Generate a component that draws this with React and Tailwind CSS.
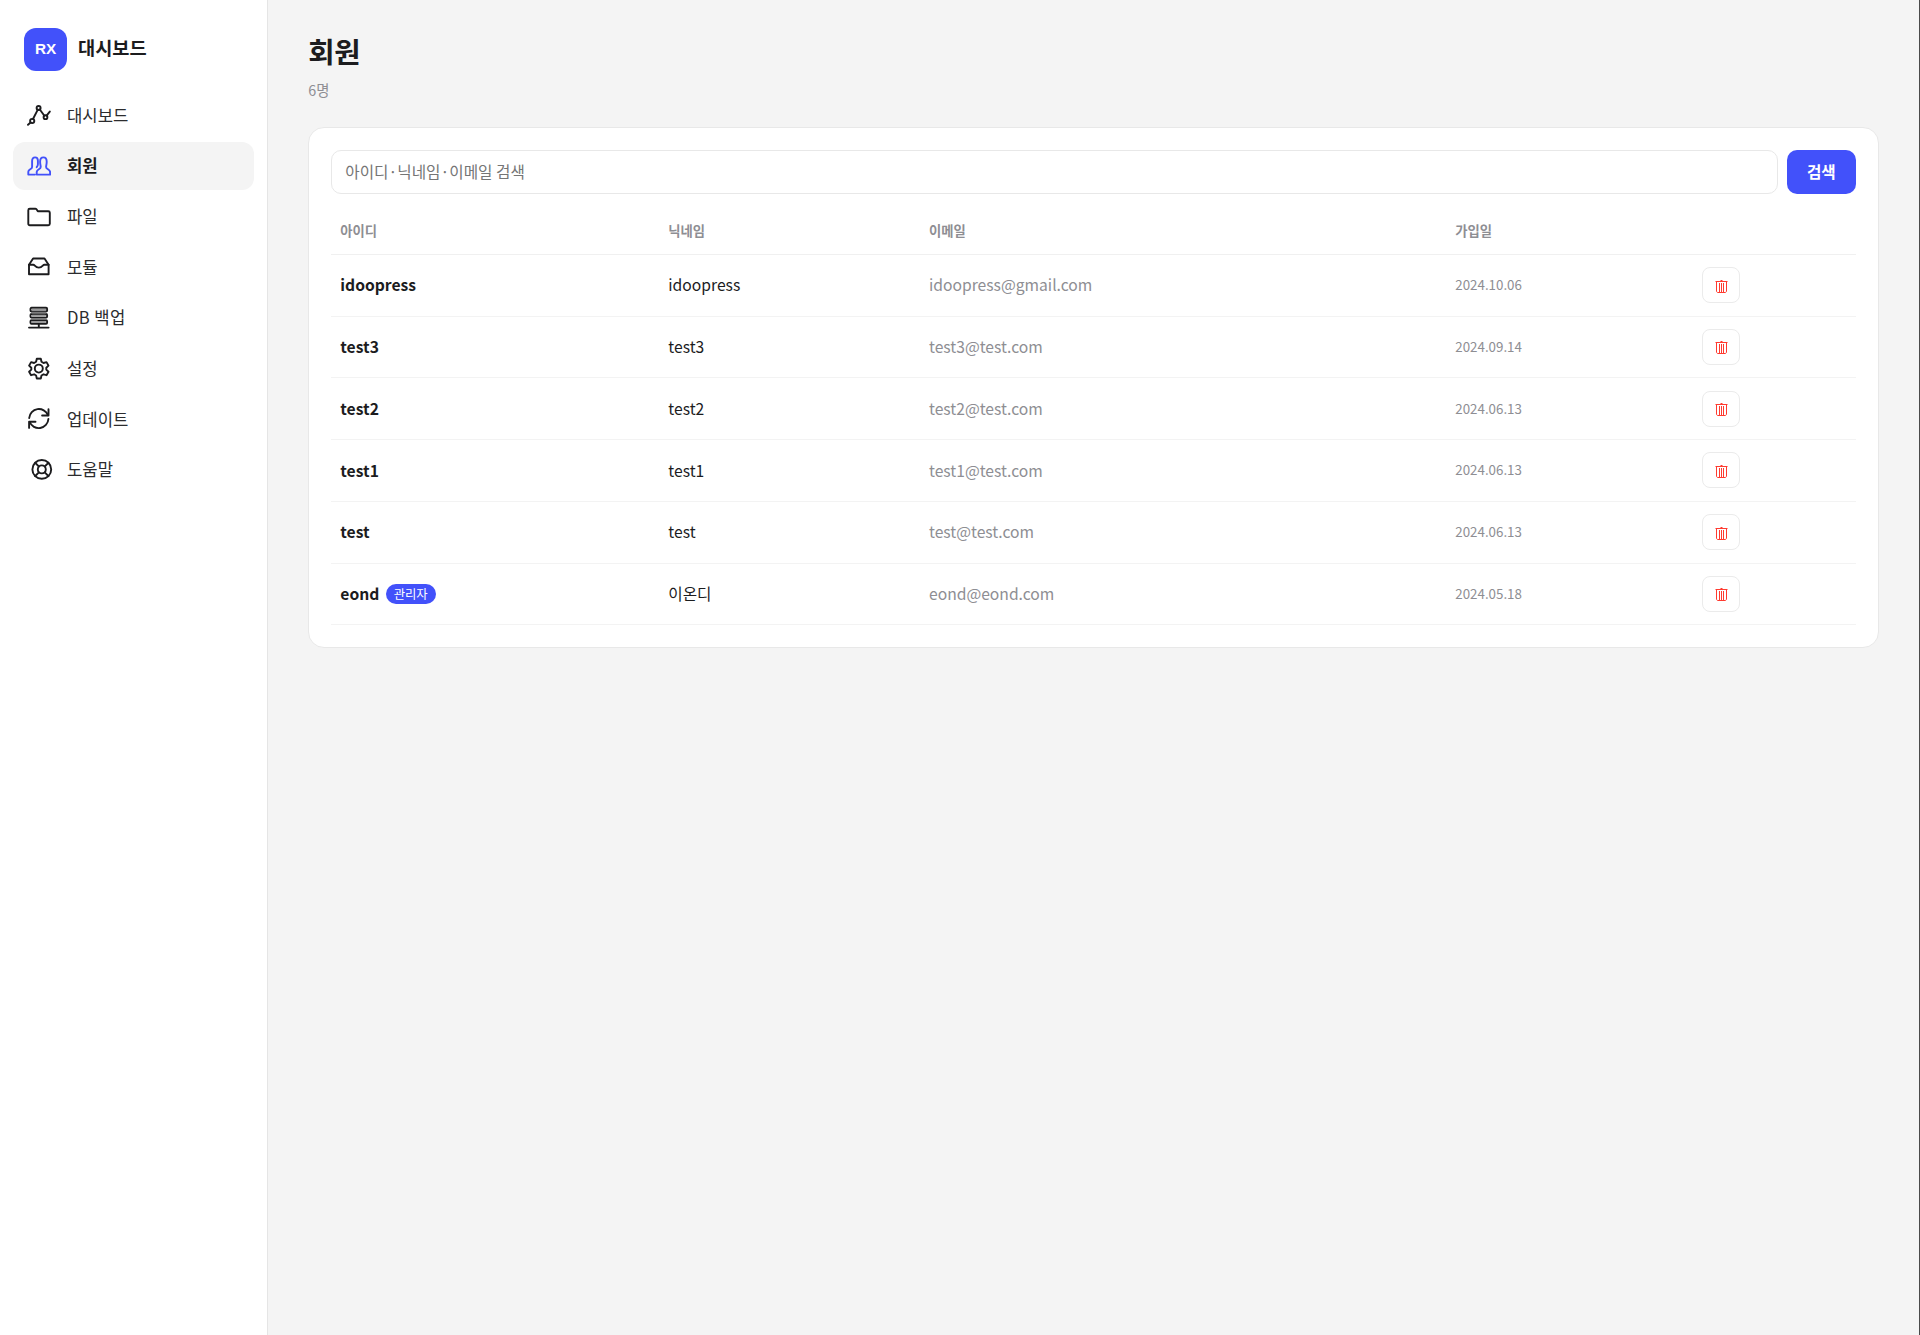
import React from 'react';
import clsx from 'clsx';

const icons = {
  dashboard: (
    <>
      <circle cx="11.6" cy="5" r="2" />
      <circle cx="5.2" cy="18" r="2.1" />
      <circle cx="18.5" cy="14.2" r="1.9" />
      <path d="M1 21.8l2.6-2.2M6 16l4.8-9.4M12.8 6.5l4.6 6.2M19.6 12.6l3.2-4" />
    </>
  ),
  members: (
    <>
      <path d="M8 20.6H1.3v-2.8c0-2.6 3.8-2.4 3.8-4.9V7c0-2.4 1-3.6 3-3.6 1.8 0 2.8 1.1 2.8 3.3v3.6c0 1.4-.6 2.2-1.2 2.9" />
      <path d="M9.7 20.6v-2.5c0-2.8 4-2.8 4-5.2 0-1.5-.6-2.4-.6-5.2 0-2.8 1-4.3 3.3-4.3s3.3 1.5 3.3 4.3-.6 3.7-.6 5.2c0 2.4 4 2.4 4 5.2v2.5z" />
    </>
  ),
  files: <path d="M1.3 18.7V5.2c0-.9.6-1.5 1.5-1.5h5.4c.6 0 1 .2 1.3.6l1.3 1.9h10.5c.9 0 1.500.6 1.500 1.500v11c0 .9-.6 1.500-1.500 1.500H2.800c-.9 0-1.500-.6-1.500-1.500z" />,
  modules: (
    <>
      <path d="M2 9.7L6.1 3.5h11.4L21.6 9.7v9.6H2z" />
      <path d="M2 9.7h4.3c1.5 0 1.8 2.9 5.5 2.9s4-2.9 5.5-2.9h4.3" />
    </>
  ),
  backup: (
    <>
      <rect x="3.5" y="1.8" width="16.6" height="3.6" rx="1" />
      <rect x="3.5" y="8" width="16.6" height="3.6" rx="1" />
      <rect x="3.5" y="14.2" width="16.6" height="3.6" rx="1" />
      <path d="M11.8 17.8v3.8M2 21.6h19.6" />
      <path className="stroke-[#7a7a7b]" d="M5 6.7h13.6M5 12.9h13.6" />
      <path className="stroke-[#9a9a9b]" d="M5.5 3.6h12.6M5.5 9.8h12.6M5.5 16h12.6" />
    </>
  ),
  settings: (
    <>
      <circle cx="11.8" cy="11.6" r="4" />
      <path d="M9.8 1.8h4l.7 3 2 1.2 3-.9 2 3.5-2.2 2.1v1.9l2.2 2.1-2 3.5-3-.9-2 1.2-.7 3h-4l-.7-3-2-1.2-3 .9-2-3.5 2.2-2.1v-1.9L2.1 8.6l2-3.5 3 .9 2-1.2z" />
    </>
  ),
  update: (
    <>
      <path d="M2.2 11a9.7 9.7 0 0 1 18.7-2.8M21.4 12a9.7 9.7 0 0 1-18.7 3" />
      <path d="M21.5 2.3v6.2h-6.4M2.1 20.9v-6.2h6.4" />
    </>
  ),
  help: (
    <>
      <circle cx="11.8" cy="11.4" r="9.4" />
      <circle cx="11.8" cy="11.4" r="4" />
      <path d="M5.2 4.8l3.7 3.7M18.4 4.8l-3.7 3.7M5.2 18l3.7-3.7M18.4 18l-3.7-3.7" />
    </>
  ),
};

const menu = [
  { id: 'dashboard', label: '대시보드' },
  { id: 'members', label: '회원' },
  { id: 'files', label: '파일' },
  { id: 'modules', label: '모듈' },
  { id: 'backup', label: 'DB 백업' },
  { id: 'settings', label: '설정' },
  { id: 'update', label: '업데이트' },
  { id: 'help', label: '도움말' },
];

const members = [
  { id: 'idoopress', nick: 'idoopress', email: 'idoopress@gmail.com', date: '2024.10.06' },
  { id: 'test3', nick: 'test3', email: 'test3@test.com', date: '2024.09.14' },
  { id: 'test2', nick: 'test2', email: 'test2@test.com', date: '2024.06.13' },
  { id: 'test1', nick: 'test1', email: 'test1@test.com', date: '2024.06.13' },
  { id: 'test', nick: 'test', email: 'test@test.com', date: '2024.06.13' },
  { id: 'eond', nick: '이온디', email: 'eond@eond.com', date: '2024.05.18', admin: true },
];

const Sidebar = ({ active }) => (
  <aside className="w-[268px] shrink-0 border-r border-[#e5e5e5] bg-white px-[13.33px] pt-7">
    <div className="flex items-center pl-[11px]">
      <div className="flex h-[42.67px] w-[42.67px] items-center justify-center rounded-[12px] bg-[#4251fa] pt-px font-['Liberation_Sans'] text-[15.33px] font-bold text-white">
        RX
      </div>
      <span className="ml-[11px] -mt-[4px] text-[18.67px] font-bold">대시보드</span>
    </div>
    <nav className="mt-[20.33px] flex flex-col gap-[2px]">
      {menu.map((item) => (
        <a
          key={item.id}
          className={clsx(
            'flex h-[48.67px] items-center rounded-[12px] pl-[14px] text-[16.67px]',
            item.id === active ? 'bg-[#f4f4f4] font-bold' : 'text-[#2c2c2e]'
          )}
        >
          <svg
            viewBox="0 0 24 24"
            className={clsx(
              'h-6 w-6 shrink-0 fill-none stroke-[1.9]',
              item.id === active ? 'stroke-[#4251fa]' : 'stroke-[#1c1c1e]',
              item.id === 'help' ? 'ml-[3px] mr-[12.67px]' : 'mr-[15.67px]'
            )}
            strokeLinecap="round"
            strokeLinejoin="round"
          >
            {icons[item.id]}
          </svg>
          <span className={clsx(item.id === 'backup' && 'tracking-[0.4px]')}>{item.label}</span>
        </a>
      ))}
    </nav>
  </aside>
);

const TrashIcon = () => (
  <svg viewBox="0 0 13 14" className="mt-px ml-px h-[14px] w-[13px] fill-none stroke-[#ff3b30] stroke-1">
    <path d="M.5 2.5h12M5.5 1.500h2M1.500 2.500v9.500c0 .9.600 1.500 1.500 1.500h7c.9 0 1.500-.6 1.500-1.500V2.500M4.500 4v9M6.500 4v9M8.500 4v9" />
  </svg>
);

const MemberTable = () => (
  <table className="mt-[15px] w-full table-fixed text-left">
    <colgroup>
      <col className="w-[328px]" />
      <col className="w-[260.67px]" />
      <col className="w-[526.33px]" />
      <col className="w-[246.67px]" />
      <col />
    </colgroup>
    <thead>
      <tr className="h-[45.67px] border-b border-[#f0f0f0] text-[13.33px] text-[#8e8e93]">
        <th className="px-[9.33px] font-bold">아이디</th>
        <th className="px-[9.33px] font-bold">닉네임</th>
        <th className="px-[9.33px] font-bold">이메일</th>
        <th className="px-[9.33px] font-bold">가입일</th>
        <th />
      </tr>
    </thead>
    <tbody>
      {members.map((m) => (
        <tr key={m.id} className="h-[61.75px] border-b border-[#f3f3f3] text-[15.67px]">
          <td className="px-[9.33px]">
            <div className="flex items-center">
              <b className="font-bold">{m.id}</b>
              {m.admin && (
                <span className="ml-[6.33px] mt-px flex h-[20px] items-center rounded-full bg-[#4251fa] px-2 text-[12.33px] text-white">
                  관리자
                </span>
              )}
            </div>
          </td>
          <td className="px-[9.33px]">{m.nick}</td>
          <td className="px-[9.33px] text-[#8e8e93]">{m.email}</td>
          <td className="px-[9.33px] text-[13.33px] text-[#8e8e93]">{m.date}</td>
          <td className="px-[9.33px]">
            <button className="flex h-9 w-[37.67px] items-center justify-center rounded-[8px] border border-[#ebebeb]">
              <TrashIcon />
            </button>
          </td>
        </tr>
      ))}
    </tbody>
  </table>
);

const App = () => {
  return (
    <div className="flex h-[1335px] border-r border-[#4a4a4a] bg-[#f4f4f4] font-['Noto_Sans_CJK_KR',sans-serif] text-[#1c1c1e]">
      <Sidebar active="members" />
      <main className="flex-1 px-[40.33px] pt-[30px]">
        <h1 className="text-[28.67px] leading-[42px] font-bold tracking-[-0.5px]">회원</h1>
        <p className="mt-[7px] text-[14.33px] leading-[22px] text-[#8e8e93]">6명</p>

        {/* Member list card */}
        <section className="mt-[26.33px] rounded-[16px] border border-[#e8e8e8] bg-white p-[21.67px] pb-[22px]">
          <div className="flex gap-[9px]">
            <input
              placeholder="아이디·닉네임·이메일 검색"
              className="h-[43.67px] flex-1 rounded-[10px] border border-[#e8e8e8] px-[13.33px] pb-px text-[15.67px] placeholder:text-[#757575]"
            />
            <button className="h-[43.67px] w-[69.33px] rounded-[10px] bg-[#4251fa] pb-px text-[15.67px] font-bold text-white">
              검색
            </button>
          </div>
          <MemberTable />
        </section>
      </main>
    </div>
  );
};

export default App;
